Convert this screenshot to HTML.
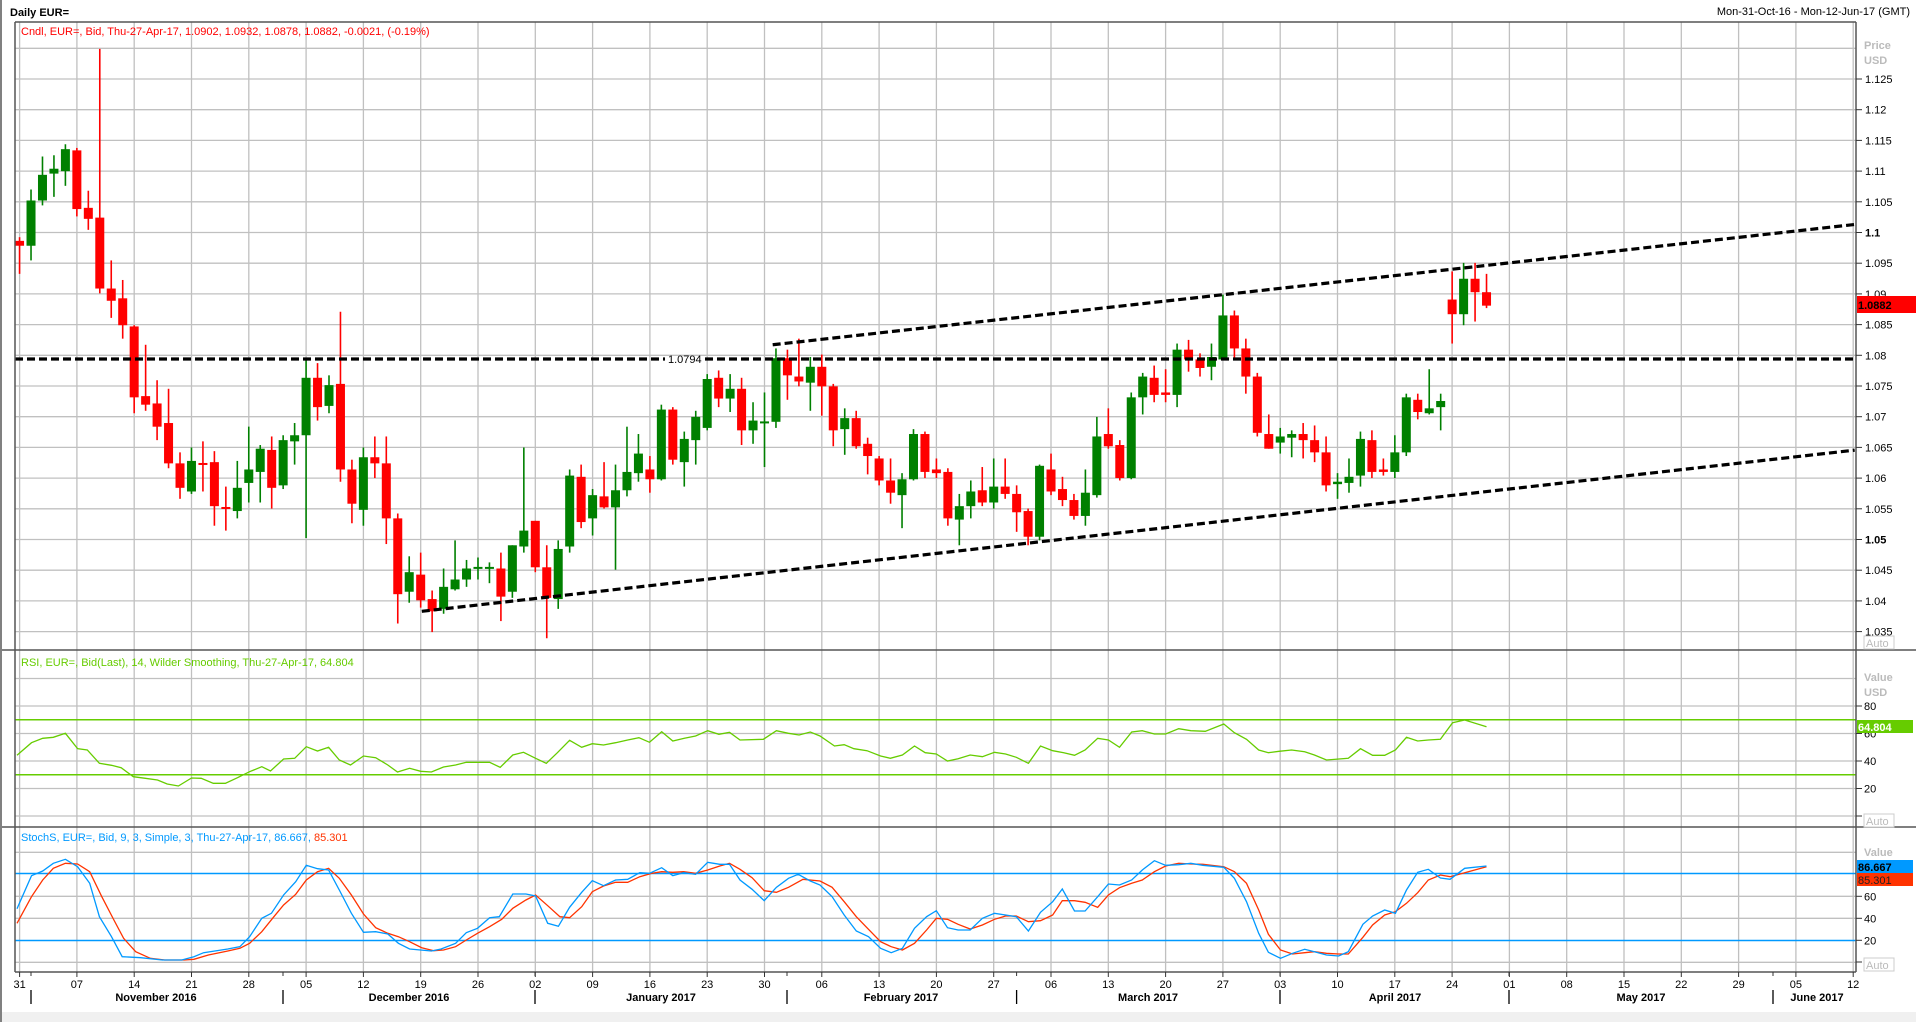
<!DOCTYPE html>
<html><head><meta charset="utf-8">
<style>
html,body{margin:0;padding:0;background:#fff;overflow:hidden}
svg{display:block}
text{font-family:"Liberation Sans",Tahoma,sans-serif;font-size:11px}
</style></head>
<body>
<svg id="c" width="1916" height="1022" viewBox="0 0 1916 1022" xmlns="http://www.w3.org/2000/svg">
<rect x="0" y="0" width="1916" height="1022" fill="#fff"/>
<rect x="0" y="1012" width="1916" height="10" fill="#f0f0f0"/>
<rect x="0" y="0" width="2" height="1022" fill="#808080"/>
<text x="10" y="16" font-weight="bold" font-size="12">Daily EUR=</text>
<text x="1910" y="15" text-anchor="end">Mon-31-Oct-16 - Mon-12-Jun-17 (GMT)</text>
<g id="grid"></g>
<g id="plot"></g>
<!-- frame lines -->
<line x1="15" y1="22" x2="1856" y2="22" stroke="#555" stroke-width="1.5"/>
<line x1="15" y1="22" x2="15" y2="972" stroke="#555" stroke-width="1.5"/>
<line x1="1856" y1="22" x2="1856" y2="972" stroke="#555" stroke-width="1.5"/>
<line x1="2" y1="650" x2="1916" y2="650" stroke="#555" stroke-width="1.5"/>
<line x1="2" y1="827" x2="1916" y2="827" stroke="#555" stroke-width="1.5"/>
<line x1="15" y1="972" x2="1856" y2="972" stroke="#555" stroke-width="1.5"/>
<g id="axis"></g>
<text x="21" y="35" fill="#ff0000">Cndl, EUR=, Bid, Thu-27-Apr-17, 1.0902, 1.0932, 1.0878, 1.0882, -0.0021, (-0.19%)</text>
<text x="21" y="666" fill="#66cc00">RSI, EUR=, Bid(Last),  14, Wilder Smoothing, Thu-27-Apr-17, 64.804</text>
<text x="21" y="841" fill="#0099ff">StochS, EUR=, Bid,  9, 3, Simple, 3, Thu-27-Apr-17, 86.667, <tspan fill="#ff3300">85.301</tspan></text>
</svg>
<script>
var NS="http://www.w3.org/2000/svg";
function el(p,t,a,txt){var e=document.createElementNS(NS,t);for(var k in a)e.setAttribute(k,a[k]);if(txt!=null)e.textContent=txt;document.getElementById(p).appendChild(e);return e;}
var K=1.2226;
// grid
for(var w=0;w<=32;w++){var x=19.6+w*57.3;el('grid','line',{x1:x,y1:22,x2:x,y2:972,stroke:'#c0c0c0','stroke-width':1.3});}
function py(p){return 79+(1.125-p)*6140;}
for(var i=0;i<=19;i++){var p=1.13-i*0.005;var y=py(p);if(y>24&&y<650)el('grid','line',{x1:15,y1:y,x2:1856,y2:y,stroke:'#c0c0c0','stroke-width':1.3});}
function ry(v){return 816-v*1.375;}
[100,80,60,40,20,0].forEach(function(v){el('grid','line',{x1:15,y1:ry(v),x2:1856,y2:ry(v),stroke:'#c0c0c0','stroke-width':1.3});});
function sy(v){return 962.3-v*1.1;}
[100,60,40,0].forEach(function(v){el('grid','line',{x1:15,y1:sy(v),x2:1856,y2:sy(v),stroke:'#c0c0c0','stroke-width':1.3});});
// level lines
el('grid','line',{x1:15,y1:ry(70),x2:1856,y2:ry(70),stroke:'#66cc00','stroke-width':1.6});
el('grid','line',{x1:15,y1:ry(30),x2:1856,y2:ry(30),stroke:'#66cc00','stroke-width':1.6});
el('grid','line',{x1:15,y1:873.5,x2:1856,y2:873.5,stroke:'#0099ff','stroke-width':1.6});
el('grid','line',{x1:15,y1:940.5,x2:1856,y2:940.5,stroke:'#0099ff','stroke-width':1.6});
// candles [top,bottom,high,low,color] in displayed coords
var C=[[197,201,194,224,'r'],[164,201,155,213,'g'],[143,164,128,168,'g'],[138,142,127,161,'g'],[122,140,118,152,'g'],
[123,171,121,177,'r'],[170,179,156,188,'r'],[178,236,40,240,'r'],[236,246,213,260,'r'],[244,266,229,277,'r'],
[267,325,266,338,'r'],[324,331,282,336,'r'],[330,349,311,360,'r'],[346,379,318,383,'r'],[379,399,370,408,'r'],
[377,402,366,404,'g'],[379,380,361,402,'r'],[378,414,369,430,'r'],[415,416,398,434,'r'],[399,418,377,424,'g'],
[384,395,349,411,'g'],[367,386,364,411,'g'],[368,399,357,416,'r'],[360,397,356,400,'g'],[356,361,346,380,'g'],
[309,356,293,440,'g'],[309,333,297,344,'r'],[315,332,307,338,'g'],[314,384,255,394,'r'],[384,412,376,428,'r'],
[374,417,366,430,'g'],[374,379,357,391,'r'],[379,424,357,445,'r'],[424,486,420,510,'r'],[468,484,455,493,'g'],
[470,491,452,497,'r'],[490,500,483,517,'r'],[480,498,465,502,'g'],[474,482,442,483,'g'],[465,474,458,480,'g'],
[464,465,456,474,'g'],[464,465,460,477,'g'],[465,488,452,508,'r'],[446,484,446,489,'g'],[434,447,366,452,'g'],
[426,464,426,468,'r'],[464,489,446,522,'r'],[449,490,442,498,'g'],[389,447,384,452,'g'],[390,427,380,432,'r'],
[405,424,400,438,'g'],[406,415,378,416,'r'],[401,415,380,466,'g'],[386,401,349,406,'g'],[371,387,355,394,'g'],
[384,392,373,403,'r'],[335,392,331,393,'g'],[335,376,333,380,'r'],[359,378,353,398,'g'],[341,360,336,380,'g'],
[310,350,306,352,'g'],[309,326,303,333,'r'],[318,326,306,337,'g'],[318,352,309,364,'r'],[344,352,329,363,'g'],
[345,346,321,382,'g'],[293,345,285,350,'g'],[293,307,286,327,'r'],[308,312,277,316,'r'],[300,313,292,336,'g'],
[300,316,290,340,'r'],[316,352,314,365,'r'],[342,351,334,372,'g'],[342,365,336,367,'r'],[363,373,358,388,'r'],
[375,393,373,397,'r'],[393,403,375,412,'r'],[392,405,387,432,'g'],[355,392,351,393,'g'],[355,386,353,391,'r'],
[384,387,375,391,'r'],[386,424,383,430,'r'],[414,425,404,446,'g'],[402,414,393,424,'g'],[401,411,382,414,'r'],
[398,411,375,416,'g'],[398,404,375,408,'r'],[404,419,397,435,'r'],[418,439,416,446,'r'],[381,439,380,442,'g'],
[384,402,371,405,'r'],[400,409,390,414,'r'],[409,422,404,425,'r'],[403,422,384,430,'g'],[357,405,341,407,'g'],
[355,365,334,367,'r'],[364,391,360,393,'r'],[325,391,321,392,'g'],[308,325,305,339,'g'],[309,323,299,329,'r'],
[321,323,302,329,'r'],[286,323,281,333,'g'],[286,294,278,304,'r'],[294,301,289,308,'r'],[292,300,281,311,'g'],
[258,294,241,294,'g'],[258,285,254,294,'r'],[285,308,277,322,'r'],[308,354,305,357,'r'],[355,367,339,367,'r'],
[357,362,350,371,'g'],[355,358,352,374,'g'],[355,360,346,375,'r'],[360,370,348,378,'r'],[370,397,357,402,'r'],
[394,396,387,408,'g'],[390,395,375,403,'g'],[359,389,353,398,'g'],[360,386,352,391,'r'],[384,386,375,389,'r'],
[370,386,356,391,'g'],[325,370,322,373,'g'],[327,337,322,343,'r'],[334,338,302,339,'g'],[328,333,322,352,'g'],
[245,257,222,281,'r'],[228,257,215,266,'g'],[228,239,215,263,'r'],[239,250,224,252,'r']];
C.forEach(function(c,d){
  var x=(16+d*9.374)*K;var col=c[4]=='r'?'#ff0000':'#008000';
  el('plot','line',{x1:x,y1:c[2]*K,x2:x,y2:c[3]*K,stroke:col,'stroke-width':1.6});
  var t=c[0]*K,b=c[1]*K;if(b-t<2){t=(t+b)/2-1;b=t+2;}
  el('plot','rect',{x:x-4.5,y:t,width:9,height:b-t,fill:col});
});
// dashed lines
var ds={stroke:'#000','stroke-width':3.2,'stroke-dasharray':'8 4',fill:'none'};
function dl(x1,y1,x2,y2){var a={x1:x1,y1:y1,x2:x2,y2:y2};for(var k in ds)a[k]=ds[k];el('plot','line',a);}
var hy=py(1.0794);
dl(15,hy,665,hy);dl(705,hy,1856,hy);
el('plot','text',{x:668,y:hy+4,fill:'#000'},'1.0794');
dl(632*K,282*K,1517*K,183.6*K);
dl(345*K,500*K,1517*K,368.2*K);
// RSI
var r8=[[35,316],[65,278],[88,265],[110,262],[135,250],[160,296],[180,300],[205,340],[230,346],[250,353],[275,380],[300,385],[325,390],[345,402],[368,408],[395,384],[415,385],[440,400],[465,400],[490,383],[515,365],[540,350],[558,363],[585,327],[608,325],[632,290],[655,303],[678,292],[700,330],[723,345],[750,318],[775,323],[800,345],[820,366],[845,355],[868,364],[890,366],[915,351],[940,345],[962,337],[1010,337],[1032,352],[1058,315],[1080,307],[1105,325],[1127,340],[1150,308],[1175,271],[1200,292],[1222,281],[1245,285],[1270,278],[1295,270],[1318,263],[1340,277],[1365,245],[1388,273],[1412,265],[1435,258],[1460,242],[1483,253],[1505,247]];
var r9=[[0,270],[48,268],[75,242],[100,250],[122,255],[145,246],[165,258],[195,288],[215,284],[235,296],[262,302],[290,318],[310,325],[335,315],[360,288],[382,308],[405,312],[428,333],[450,326],[475,315],[500,320],[525,307],[548,312],[570,322],[595,340],[620,288],[645,302],[668,308],[690,316],[712,300],[738,265],[760,270],[783,292],[808,246],[830,242],[855,252],[878,252],[905,236],[930,242],[960,244],[998,222],[1020,248],[1045,268],[1070,300],[1090,308],[1112,304],[1138,300],[1165,305],[1185,315],[1210,330],[1255,325],[1280,296],[1305,316],[1330,316],[1352,300],[1375,262],[1398,273],[1420,270],[1445,268],[1470,218],[1495,210],[1540,230]];
function pts(a8,a9){var s=[];a8.forEach(function(p){var x=p[0]/2.063;if(x<740)s.push(x.toFixed(1)+','+(650+p[1]/3).toFixed(1));});
a9.forEach(function(p){s.push((740+p[0]/2.063).toFixed(1)+','+(650+p[1]/3).toFixed(1));});return s.join(' ');}
el('plot','polyline',{points:pts(r8,r9),fill:'none',stroke:'#66cc00','stroke-width':1.3});
// Stoch
var b8=[[35,776],[65,677],[88,663],[110,640],[135,628],[160,650],[185,700],[205,800],[230,860],[252,920],[290,923],[335,930],[375,930],[400,920],[420,908],[470,897],[495,890],[515,860],[540,805],[560,790],[585,735],[610,695],[632,646],[655,656],[678,660],[700,720],[725,790],[750,847],[775,845],[800,852],[822,880],[845,897],[890,903],[910,897],[940,880],[962,848],[985,835],[1010,803],[1030,800],[1058,732],[1085,732],[1105,738],[1130,820],[1152,829],[1175,772],[1200,727],[1222,692],[1245,707],[1270,690],[1295,688],[1320,668],[1340,670],[1365,653],[1388,677],[1410,668],[1435,673],[1460,637],[1485,643],[1505,643]];
var b9=[[0,690],[25,718],[50,752],[75,712],[100,685],[120,673],[145,693],[165,705],[190,740],[215,795],[240,843],[265,860],[290,895],[312,908],[335,895],[360,835],[385,800],[405,782],[428,833],[450,840],[475,840],[500,805],[525,790],[548,795],[570,800],[595,843],[620,787],[645,755],[665,717],[690,783],[712,783],[738,740],[760,702],[783,705],[808,690],[830,660],[855,632],[878,646],[905,644],[930,640],[955,646],[998,652],[1020,685],[1045,755],[1070,850],[1090,907],[1115,925],[1140,910],[1165,898],[1185,905],[1210,915],[1235,918],[1255,905],[1285,823],[1305,798],[1330,780],[1352,790],[1375,720],[1398,667],[1420,658],[1445,684],[1465,688],[1495,655],[1540,648]];
var d8=[[35,820],[65,740],[88,690],[110,655],[135,640],[160,642],[185,665],[210,740],[235,810],[255,865],[280,905],[310,925],[340,930],[380,930],[400,928],[430,915],[470,903],[495,895],[515,880],[540,845],[565,800],[585,765],[610,733],[632,690],[655,665],[678,655],[700,685],[725,735],[750,792],[775,833],[800,850],[822,860],[845,875],[870,893],[895,902],[915,900],[940,890],[962,870],[985,850],[1010,830],[1035,808],[1058,775],[1085,750],[1105,735],[1130,767],[1155,800],[1175,803],[1200,770],[1222,725],[1245,708],[1270,697],[1295,697],[1320,680],[1345,670],[1365,665],[1388,667],[1410,665],[1435,670],[1460,660],[1485,648],[1505,640]];
var d9=[[0,658],[25,683],[50,722],[75,727],[100,712],[130,688],[165,693],[190,712],[215,755],[240,800],[265,838],[290,875],[312,890],[335,900],[360,880],[385,840],[405,805],[428,808],[450,823],[475,837],[500,825],[525,808],[548,798],[570,798],[595,815],[620,812],[645,795],[665,752],[690,752],[712,757],[738,772],[760,735],[783,713],[808,700],[830,690],[855,665],[878,648],[905,640],[930,642],[955,643],[998,650],[1020,665],[1045,700],[1070,780],[1090,853],[1115,900],[1140,912],[1165,908],[1185,905],[1210,910],[1235,912],[1255,912],[1285,862],[1305,825],[1330,795],[1352,785],[1375,760],[1398,728],[1420,690],[1445,675],[1465,680],[1495,668],[1540,650]];
el('plot','polyline',{points:pts(d8,d9),fill:'none',stroke:'#ff3300','stroke-width':1.3});
el('plot','polyline',{points:pts(b8,b9),fill:'none',stroke:'#0099ff','stroke-width':1.3});
// right axis
function tick(y){el('axis','line',{x1:1856,y1:y,x2:1862,y2:y,stroke:'#333','stroke-width':1});}
for(var i=1;i<=19;i++){var p=1.13-i*0.005;var y=py(p);if(y>640)continue;tick(y);
 var s=(Math.round(p*1000)/1000).toString();var b=(s=='1.1'||s=='1.05');
 el('axis','text',{x:1865,y:y+4,'font-weight':b?'bold':'normal'},s);}
el('axis','text',{x:1864,y:49,fill:'#bbb','font-weight':'bold'},'Price');
el('axis','text',{x:1864,y:64,fill:'#bbb','font-weight':'bold'},'USD');
el('axis','rect',{x:1864,y:636,width:30,height:13,fill:'#fff',stroke:'#ccc'});
el('axis','text',{x:1866,y:647,fill:'#bbb'},'Auto');
el('axis','rect',{x:1857,y:296,width:59,height:17,fill:'#ff0000'});
el('axis','text',{x:1858,y:309,'font-weight':'bold','font-size':'12px',fill:'#000'},'1.0882');
[80,60,40,20].forEach(function(v){tick(ry(v));el('axis','text',{x:1864,y:ry(v)+4},String(v));});
tick(816);
el('axis','text',{x:1864,y:681,fill:'#bbb','font-weight':'bold'},'Value');
el('axis','text',{x:1864,y:696,fill:'#bbb','font-weight':'bold'},'USD');
el('axis','rect',{x:1857,y:720,width:56,height:13,fill:'#66cc00'});
el('axis','text',{x:1858,y:731,'font-weight':'bold',fill:'#fff','font-size':'12px'},'64.804');
el('axis','rect',{x:1864,y:814,width:30,height:13,fill:'#fff',stroke:'#ccc'});
el('axis','text',{x:1866,y:825,fill:'#bbb'},'Auto');
[60,40,20].forEach(function(v){tick(sy(v));el('axis','text',{x:1864,y:sy(v)+4},String(v));});
tick(962);
el('axis','text',{x:1864,y:856,fill:'#bbb','font-weight':'bold'},'Value');
el('axis','rect',{x:1857,y:860,width:56,height:13,fill:'#0099ff'});
el('axis','text',{x:1858,y:871,'font-weight':'bold',fill:'#000','font-size':'12px'},'86.667');
el('axis','rect',{x:1857,y:873,width:56,height:13,fill:'#ff3300'});
el('axis','text',{x:1858,y:884,fill:'#222','font-size':'12px'},'85.301');
el('axis','rect',{x:1864,y:958,width:30,height:13,fill:'#fff',stroke:'#ccc'});
el('axis','text',{x:1866,y:969,fill:'#bbb'},'Auto');
// date axis
var days=['31','07','14','21','28','05','12','19','26','02','09','16','23','30','06','13','20','27','06','13','20','27','03','10','17','24','01','08','15','22','29','05','12'];
days.forEach(function(d,w){var x=19.6+w*57.3;el('axis','line',{x1:x,y1:972,x2:x,y2:977,stroke:'#333'});el('axis','text',{x:x,y:988,'text-anchor':'middle'},d);});
[31,283,535,787,1016.6,1280,1509,1773].forEach(function(x){el('axis','line',{x1:x,y1:972,x2:x,y2:976,stroke:'#333'});el('axis','line',{x1:x,y1:990,x2:x,y2:1004,stroke:'#000','stroke-width':1.3});});
[['November 2016',156],['December 2016',409],['January 2017',661],['February 2017',901],['March 2017',1148],['April 2017',1395],['May 2017',1641],['June 2017',1817]].forEach(function(m){el('axis','text',{x:m[1],y:1001,'text-anchor':'middle','font-weight':'bold'},m[0]);});
</script>
</body></html>
